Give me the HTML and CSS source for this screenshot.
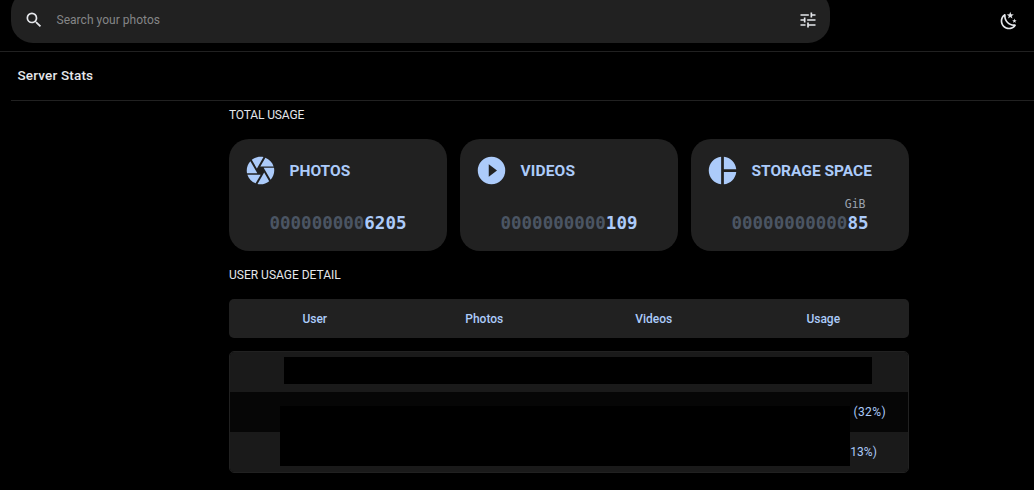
FILE: index.html
```html
<!DOCTYPE html>
<html lang="en">
<head>
<meta charset="utf-8">
<title>Server Stats</title>
<link rel="stylesheet" href="styles.css">
</head>
<body>
<header class="topbar">
  <div class="search">
    <svg class="icon" viewBox="0 0 24 24"><path d="M9.5,3A6.5,6.5 0 0,1 16,9.5C16,11.11 15.41,12.59 14.44,13.73L14.71,14H15.5L20.5,19L19,20.5L14,15.5V14.71L13.73,14.44C12.59,15.41 11.11,16 9.5,16A6.5,6.5 0 0,1 3,9.5A6.5,6.5 0 0,1 9.5,3M9.5,5C7,5 5,7 5,9.5C5,12 7,14 9.5,14C12,14 14,12 14,9.5C14,7 12,5 9.5,5Z"/></svg>
    <span class="placeholder">Search your photos</span>
    <svg class="icon" viewBox="0 0 24 24"><path d="M3,17V19H9V17H3M3,5V7H13V5H3M13,21V19H21V17H13V15H11V21H13M7,9V11H3V13H7V15H9V9H7M21,13V11H11V13H21M15,9H17V7H21V5H17V3H15V9Z"/></svg>
  </div>
  <svg class="icon" viewBox="0 0 24 24"><path d="M17.75,4.09L15.22,6.03L16.13,9.09L13.5,7.28L10.87,9.09L11.78,6.03L9.25,4.09L12.44,4L13.5,1L14.56,4L17.75,4.09M21.25,11L19.61,12.25L20.2,14.23L18.5,13.06L16.8,14.23L17.39,12.25L15.75,11L17.81,10.95L18.5,9L19.19,10.95L21.25,11M18.97,15.95C19.8,15.87 20.69,17.05 20.16,17.8C19.84,18.25 19.5,18.67 19.08,19.07C15.17,23 8.84,23 4.94,19.07C1.03,15.17 1.03,8.83 4.94,4.93C5.34,4.53 5.76,4.17 6.21,3.85C6.96,3.32 8.14,4.21 8.06,5.04C7.79,7.9 8.75,10.87 10.95,13.06C13.14,15.26 16.1,16.22 18.97,15.95M17.33,17.97C14.5,17.81 11.7,16.64 9.53,14.5C7.36,12.31 6.2,9.5 6.04,6.68C3.23,9.82 3.34,14.64 6.35,17.66C9.37,20.67 14.19,20.78 17.33,17.97Z"/></svg>
</header>
<div class="titlebar"><h1 class="title">Server Stats</h1></div>
<main class="content">
  <h2 class="heading total">TOTAL USAGE</h2>
  <section class="cards">
    <article class="card">
      <div class="card-head">
        <svg class="card-icon" viewBox="0 0 24 24"><path d="M13.73,15L9.83,21.76C10.53,21.91 11.25,22 12,22C14.4,22 16.6,21.15 18.32,19.75L14.66,13.4M2.46,15C3.38,17.92 5.61,20.26 8.45,21.34L12.12,15M8.54,12L4.64,5.25C3,7 2,9.39 2,12C2,12.68 2.07,13.35 2.2,14H9.69M21.8,10H14.31L14.6,10.5L19.36,18.75C21,16.97 22,14.6 22,12C22,11.31 21.93,10.64 21.8,10M21.54,9C20.62,6.07 18.39,3.74 15.55,2.66L11.88,9M9.4,10.5L14.17,2.24C13.47,2.09 12.75,2 12,2C9.6,2 7.4,2.84 5.68,4.25L9.34,10.6L9.4,10.5Z"/></svg>
        <span class="card-name">PHOTOS</span>
      </div>
      <div class="count"><span class="zeros">000000000</span>6205</div>
    </article>
    <article class="card">
      <div class="card-head">
        <svg class="card-icon" viewBox="0 0 24 24"><path d="M10,16.5V7.5L16,12M12,2A10,10 0 0,0 2,12A10,10 0 0,0 12,22A10,10 0 0,0 22,12A10,10 0 0,0 12,2Z"/></svg>
        <span class="card-name videos">VIDEOS</span>
      </div>
      <div class="count"><span class="zeros">0000000000</span>109</div>
    </article>
    <article class="card">
      <div class="card-head">
        <svg class="card-icon" viewBox="0 0 24 24"><path d="M11,2V22C5.9,21.5 2,17.2 2,12C2,6.8 5.9,2.5 11,2M13,2V11H22C21.5,6.2 17.8,2.5 13,2M13,13V22C17.7,21.5 21.5,17.8 22,13H13Z"/></svg>
        <span class="card-name">STORAGE SPACE</span>
      </div>
      <div class="count"><span class="unit">GiB</span><span class="zeros">00000000000</span>85</div>
    </article>
  </section>
  <h2 class="heading detail">USER USAGE DETAIL</h2>
  <div class="table-head">
    <span>User</span><span>Photos</span><span>Videos</span><span>Usage</span>
  </div>
  <div class="table-body">
    <div class="row"></div>
    <div class="row dark"><span class="percent">(32%)</span></div>
    <div class="row"><span class="percent last">13%)</span></div>
    <div class="mask mask-top"></div>
    <div class="mask mask-bottom"></div>
  </div>
</main>
</body>
</html>
```

FILE: styles.css
```css
* { box-sizing: border-box; }
body {
  margin: 0;
  height: 490px;
  overflow: hidden;
  background: #000;
  color: #e5e7eb;
  font-family: Roboto, "Liberation Sans", sans-serif;
  font-size: 12px;
}
h1, h2 { margin: 0; }
svg { display: block; flex: none; fill: currentColor; }
.topbar {
  display: flex;
  align-items: flex-start;
  justify-content: space-between;
  height: 52px;
  padding: 0 15.5px 0 11px;
  border-bottom: 1px solid #212121;
}
.topbar > .icon { margin-top: 10.5px; }
.icon { width: 20px; height: 20px; }
.search {
  display: flex;
  align-items: center;
  width: 819px;
  height: 53px;
  margin-top: -10px;
  padding: 7px 12.5px 0;
  border-radius: 22px;
  background: #212121;
}
.search .icon:last-child { margin-left: auto; }
.placeholder {
  margin-left: 13px;
  color: #858687;
  letter-spacing: 0.03px;
}
.titlebar {
  display: flex;
  align-items: center;
  height: 49px;
  margin-left: 11px;
  padding: 0 0 2px 6.5px;
  border-bottom: 1px solid #212121;
}
.title { font-size: 13.5px; font-weight: 500; letter-spacing: 0.17px; }
.content { width: 680px; margin-left: 229px; }
.heading { font-size: 12px; font-weight: 400; line-height: 16px; }
.total { padding-top: 6px; letter-spacing: -0.15px; }
.cards { display: flex; gap: 13px; margin-top: 16px; }
.card {
  width: 218px;
  height: 112px;
  padding: 15px 15.5px;
  border-radius: 20px;
  background: #212121;
  color: #accbfa;
}
.card-head { display: flex; align-items: center; gap: 12.5px; height: 33px; }
.card-icon { width: 33px; height: 33px; }
.card:nth-child(n) .card-icon { margin-left: -0.5px; }
.card-name { font-size: 15.5px; font-weight: 700; white-space: nowrap; }
.card-name.videos { letter-spacing: 0.15px; }
.count {
  position: relative;
  width: 137px;
  margin: 24px auto 0;
  font: 700 17.5px/24px "DejaVu Sans Mono", monospace;
}
.zeros { color: #4b5563; }
.unit {
  position: absolute;
  right: 3px;
  top: -19px;
  color: #9ca3af;
  font-size: 11.5px;
  font-weight: 400;
}
.detail { margin-top: 16px; }
.table-head {
  display: grid;
  grid-template-columns: repeat(4, 169.5px);
  align-items: center;
  height: 39px;
  margin-top: 16px;
  padding-left: 1px;
  padding-top: 1px;
  border-radius: 5px;
  background: #212121;
  color: #accbfa;
  font-weight: 500;
  text-align: center;
}
.table-body {
  position: relative;
  height: 122px;
  margin-top: 13px;
  border: 1px solid #212121;
  border-radius: 5px;
  overflow: hidden;
  color: #accbfa;
}
.row {
  display: flex;
  align-items: center;
  justify-content: flex-end;
  height: 40px;
  padding-right: 22px;
  background: #1a1a1a;
}
.row.dark { background: #060606; }
.percent { letter-spacing: 0.4px; }
.last { margin-right: 9px; letter-spacing: 0.1px; }
.mask { position: absolute; background: #000; }
.mask-top { left: 54px; top: 5px; width: 588px; height: 27px; }
.mask-bottom { left: 50px; top: 54px; width: 570px; height: 60px; }
```
